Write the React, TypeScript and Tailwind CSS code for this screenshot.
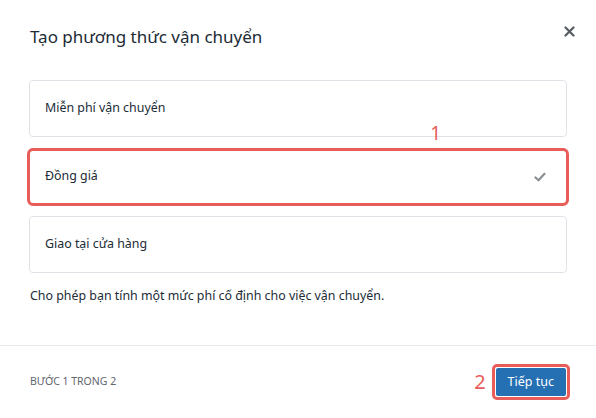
import React from "react";

const font = { fontFamily: '"Noto Sans", "Open Sans", sans-serif' };

export default function App() {
  return (
    <div className="w-[596px] h-[418px] bg-white flex flex-col text-[#212b36] relative overflow-hidden" style={font}>
      <div className="flex items-start justify-between pl-[30px] pr-[20px] pt-[23px] h-[80px]">
        <h1 className="text-[17px] leading-[28px] font-normal text-[#212b36]">Tạo phương thức vận chuyển</h1>
        <button className="mt-[1px] w-[14px] h-[14px] flex items-center justify-center text-[#5c636a]">
          <svg width="11" height="11" viewBox="0 0 11 11">
            <path d="M1.5 1.5 L9.5 9.5 M9.5 1.5 L1.5 9.5" stroke="#555b61" strokeWidth="2.2" strokeLinecap="round" />
          </svg>
        </button>
      </div>
      <div className="flex flex-col px-[29px]">
        <div className="h-[57px] border border-[#dfe3e8] rounded-[4px] flex items-center px-[15px] text-[12.4px]">
          Miễn phí vận chuyển
        </div>
        <div className="relative mt-[11px] h-[57px] border border-[#4f8ab8] rounded-[4px] flex items-center justify-between px-[15px] text-[12.4px]">
          <span>Đồng giá</span>
          <svg width="12" height="10" viewBox="0 0 12 10" className="mr-[5px]">
            <path d="M1.5 5.5 L4.5 8.3 L10.5 1.8" stroke="#8a8f94" strokeWidth="2.2" fill="none" strokeLinecap="round" strokeLinejoin="round" />
          </svg>
          <div className="absolute left-[-3px] right-[-3px] top-[-1px] bottom-[-2px] border-[3px] border-[#e85d59] rounded-[6px]" />
          <span className="absolute right-[125px] top-[-27px] text-[19px] leading-[22px] text-[#e85d59]">1</span>
        </div>
        <div className="mt-[11px] h-[57px] border border-[#dfe3e8] rounded-[4px] flex items-center px-[15px] text-[12.4px]">
          Giao tại cửa hàng
        </div>
        <p className="mt-[14px] pl-[1px] text-[12.4px] leading-[18px]">Cho phép bạn tính một mức phí cố định cho việc vận chuyển.</p>
      </div>
      <div className="mt-auto border-t border-[#e8eaed] h-[73px] flex items-center justify-between pl-[30px] pr-[26px]">
        <span className="text-[10.5px] text-[#5f666d] uppercase">Bước 1 trong 2</span>
        <div className="flex items-center gap-[6px]">
          <span className="text-[20px] leading-[22px] text-[#e85d59]">2</span>
          <div className="rounded-[5px] border-[3px] border-[#e85d59] p-[1px]">
            <button className="h-[28px] px-[12px] bg-[#2470b3] text-white text-[12.5px] rounded-[2px] flex items-center">Tiếp tục</button>
          </div>
        </div>
      </div>
    </div>
  );
}
